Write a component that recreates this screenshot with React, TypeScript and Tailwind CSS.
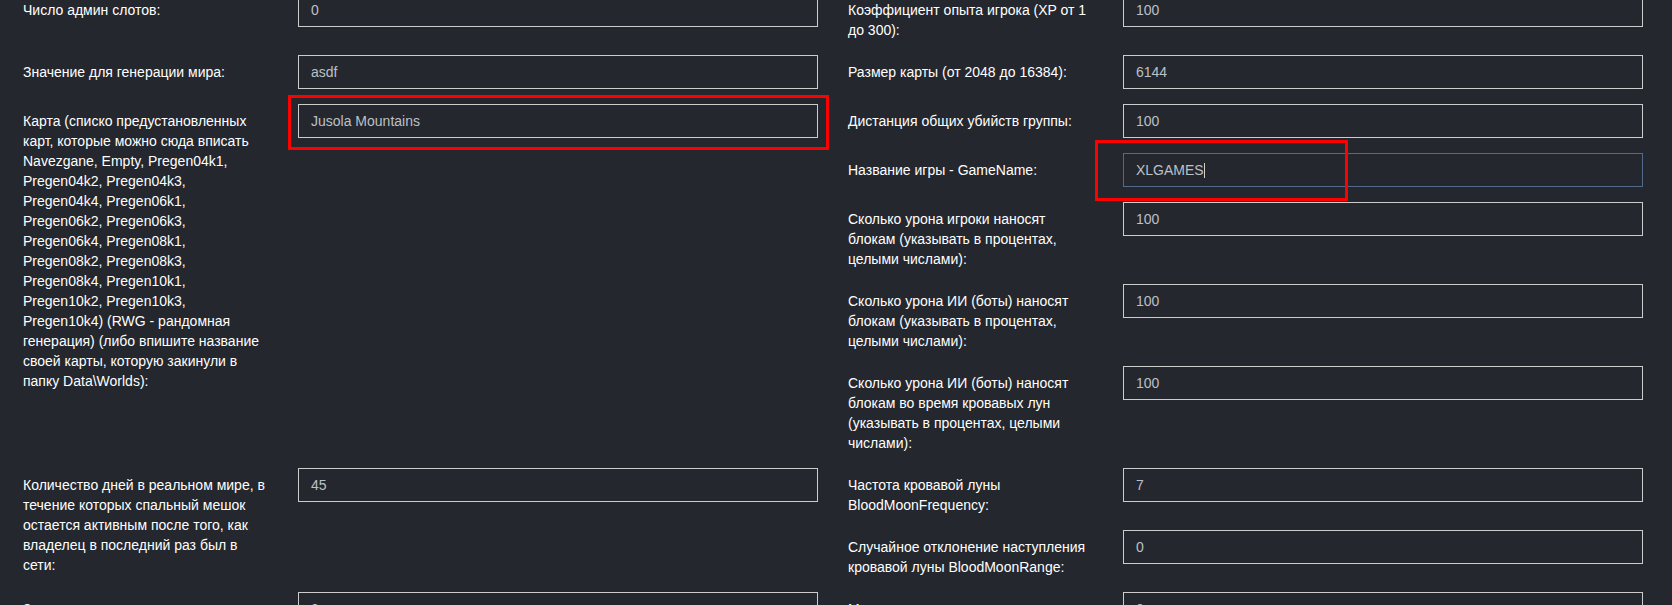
import React from "react";

type Field = {
  label: string;
  value: string;
  pos: string;
  focused?: boolean;
};

const fields: Field[] = [
  { label: "Число админ слотов:", value: "0", pos: "col-start-1 row-start-1" },
  { label: "Значение для генерации мира:", value: "asdf", pos: "col-start-1 row-start-2" },
  {
    label:
      "Карта (списко предустановленных карт, которые можно сюда вписать Navezgane, Empty, Pregen04k1, Pregen04k2, Pregen04k3, Pregen04k4, Pregen06k1, Pregen06k2, Pregen06k3, Pregen06k4, Pregen08k1, Pregen08k2, Pregen08k3, Pregen08k4, Pregen10k1, Pregen10k2, Pregen10k3, Pregen10k4) (RWG - рандомная генерация) (либо впишите название своей карты, которую закинули в папку Data\\Worlds):",
    value: "Jusola Mountains",
    pos: "col-start-1 row-start-3 row-span-5",
  },
  {
    label:
      "Количество дней в реальном мире, в течение которых спальный мешок остается активным после того, как владелец в последний раз был в сети:",
    value: "45",
    pos: "col-start-1 row-start-8 row-span-2",
  },
  { label: "Зона вокруг спального мешка:", value: "0", pos: "col-start-1 row-start-10" },

  { label: "Коэффициент опыта игрока (XP от 1 до 300):", value: "100", pos: "col-start-2 row-start-1" },
  { label: "Размер карты (от 2048 до 16384):", value: "6144", pos: "col-start-2 row-start-2" },
  { label: "Дистанция общих убийств группы:", value: "100", pos: "col-start-2 row-start-3" },
  { label: "Название игры - GameName:", value: "XLGAMES", pos: "col-start-2 row-start-4", focused: true },
  {
    label: "Сколько урона игроки наносят блокам (указывать в процентах, целыми числами):",
    value: "100",
    pos: "col-start-2 row-start-5",
  },
  {
    label: "Сколько урона ИИ (боты) наносят блокам (указывать в процентах, целыми числами):",
    value: "100",
    pos: "col-start-2 row-start-6",
  },
  {
    label:
      "Сколько урона ИИ (боты) наносят блокам во время кровавых лун (указывать в процентах, целыми числами):",
    value: "100",
    pos: "col-start-2 row-start-7",
  },
  { label: "Частота кровавой луны BloodMoonFrequency:", value: "7", pos: "col-start-2 row-start-8" },
  {
    label: "Случайное отклонение наступления кровавой луны BloodMoonRange:",
    value: "0",
    pos: "col-start-2 row-start-9",
  },
  { label: "Максимальное количество животных:", value: "0", pos: "col-start-2 row-start-10" },
];

function FormRow({ f }: { f: Field }) {
  return (
    <div className={`${f.pos} flex items-start mb-[15px]`}>
      <label className="w-[275px] shrink-0 px-[15px] pt-[7px] text-white">{f.label}</label>
      <div className="w-[550px] shrink-0 px-[15px]">
        <div
          className={`h-[34px] w-full border px-[12px] py-[6px] text-[#bcc0c7] whitespace-nowrap overflow-hidden ${
            f.focused ? "border-[#52698a]" : "border-[#cccccc]"
          }`}
        >
          {f.value}
          {f.focused && <span className="inline-block w-px h-[15px] bg-[#d0d0d0] align-[-3px]" />}
        </div>
      </div>
    </div>
  );
}

export default function App() {
  return (
    <div className="relative h-[605px] w-full overflow-hidden bg-[#24272e] font-['Liberation_Sans',Arial,Helvetica,sans-serif] text-[14px] leading-[20px]">
      <div className="mt-[-7px] pl-[8px] grid grid-cols-[825px_825px]">
        {fields.map((f, i) => (
          <FormRow key={i} f={f} />
        ))}
      </div>
      <div className="absolute left-[288px] top-[95px] w-[541px] h-[55px] border-[3px] border-[#ff0000] pointer-events-none" />
      <div className="absolute left-[1095px] top-[140px] w-[253px] h-[61px] border-[3px] border-[#ff0000] pointer-events-none" />
    </div>
  );
}
